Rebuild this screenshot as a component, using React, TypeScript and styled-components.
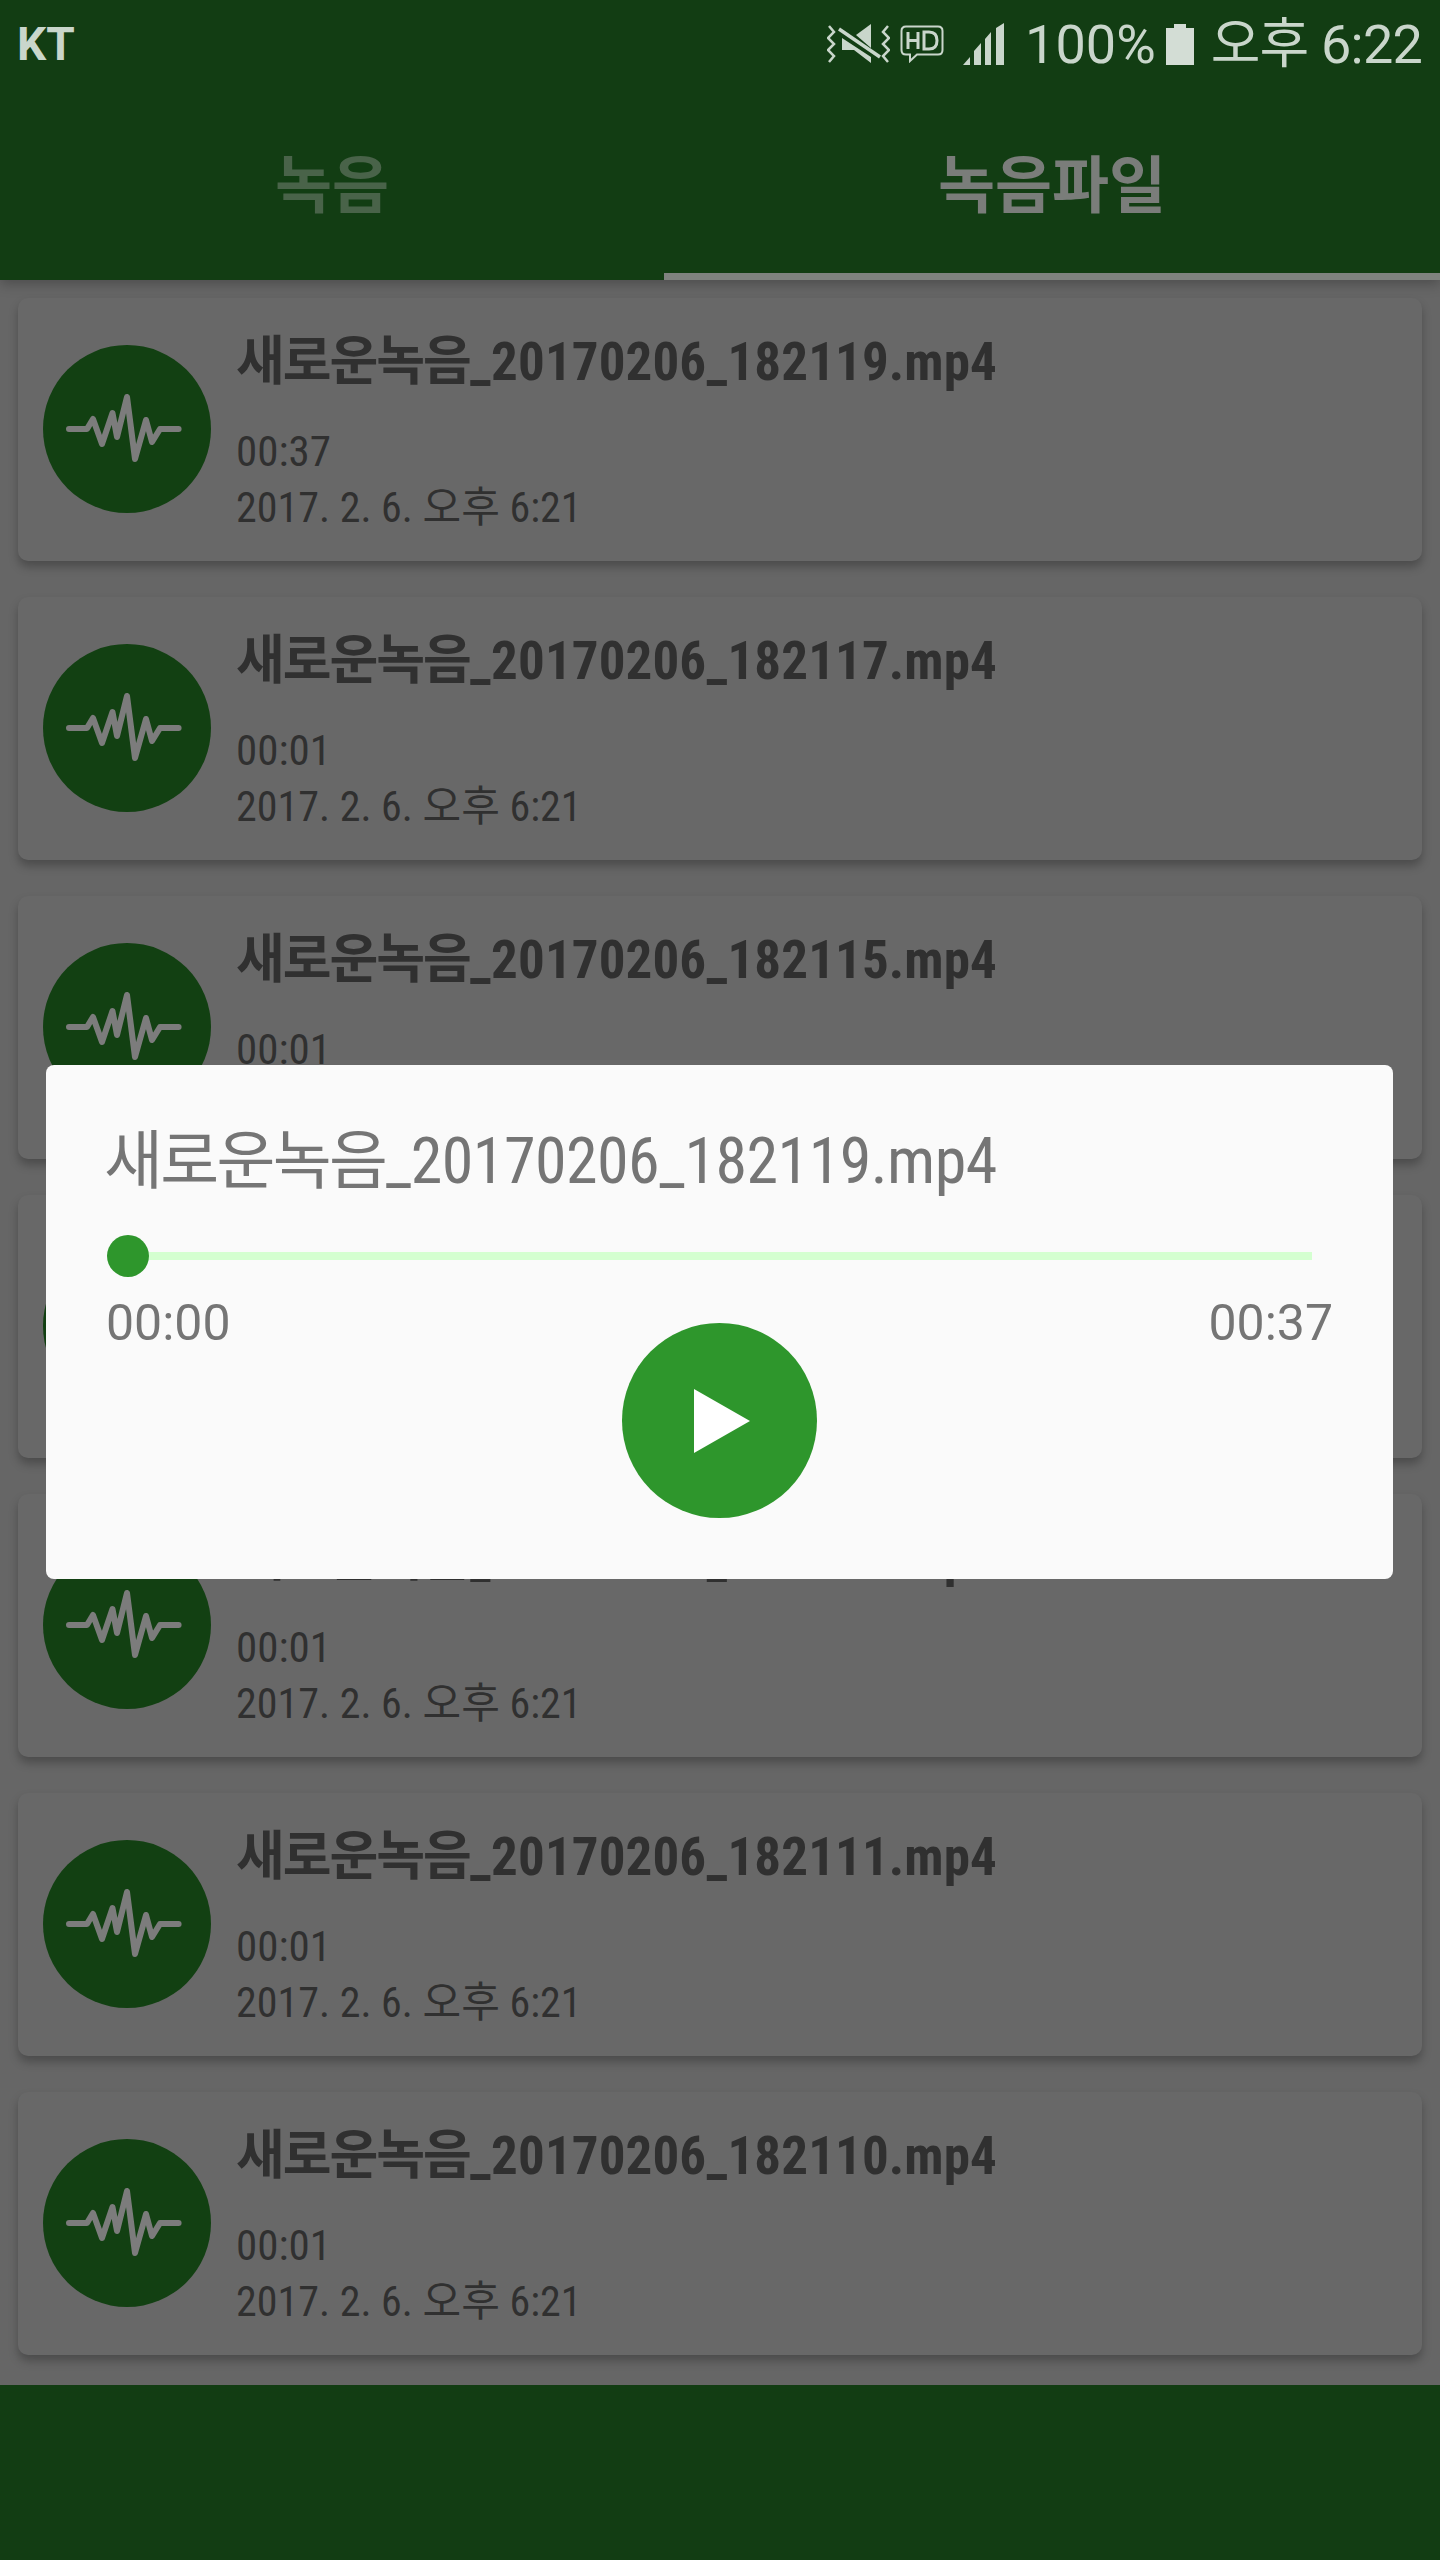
import styled, { createGlobalStyle } from "styled-components";

const GlobalStyle = createGlobalStyle`
  html, body {
    margin: 0;
    padding: 0;
    background: #666666;
  }
  * {
    box-sizing: border-box;
  }
`;

const FONT = `Roboto, "Noto Sans CJK KR", sans-serif`;

const Screen = styled.div`
  position: relative;
  width: 1440px;
  height: 2560px;
  display: flex;
  flex-direction: column;
  overflow: hidden;
  font-family: ${FONT};
  background: #666666;
`;

const Header = styled.header`
  height: 280px;
  flex: none;
  background: #123d13;
  box-shadow: 0 4px 12px rgba(0, 0, 0, 0.25);
  z-index: 1;
`;

const StatusBar = styled.div`
  height: 88px;
  display: flex;
  align-items: center;
  padding: 0 18px 0 17px;
  color: #c9d6cb;
`;

const Carrier = styled.span`
  font-size: 46px;
  font-weight: 700;
  margin-right: auto;
`;

const StatusIcon = styled.svg<{ $gap: number }>`
  display: block;
  flex: none;
  margin-right: ${(props) => props.$gap}px;
`;

const StatusText = styled.span<{ $gap: number; $tight?: number }>`
  font-size: 54px;
  line-height: 88px;
  font-weight: 400;
  margin-top: 2px;
  margin-right: ${(props) => props.$gap}px;
  letter-spacing: ${(props) => props.$tight ?? 0}px;
`;

const Tabs = styled.div`
  height: 192px;
  display: grid;
  grid-template-columns: 664px 776px;
`;

const Tab = styled.div<{ $active?: boolean }>`
  display: flex;
  align-items: flex-start;
  justify-content: center;
  padding-top: 48px;
  font-size: 62px;
  font-weight: 700;
  color: ${(props) => (props.$active ? "#7a7d7a" : "#496349")};
  border-bottom: 7px solid ${(props) => (props.$active ? "#7f837f" : "transparent")};
`;

const List = styled.main`
  display: flex;
  flex-direction: column;
  gap: 36px;
  padding: 18px 18px 30px;
`;

const Card = styled.article`
  height: 263px;
  display: flex;
  align-items: flex-start;
  gap: 25px;
  padding: 0 25px;
  background: #686868;
  border-radius: 10px;
  box-shadow: 0 6px 10px rgba(0, 0, 0, 0.26);
`;

const Avatar = styled.div`
  width: 168px;
  height: 168px;
  flex: none;
  margin-top: 47px;
  border-radius: 50%;
  background: #124012;
`;

const Info = styled.div`
  padding-top: 34px;
  color: #303030;
  font-stretch: 75%;
`;

const FileName = styled.div`
  font-size: 53px;
  line-height: 60px;
  font-weight: 700;
  white-space: nowrap;
  letter-spacing: 0.1px;
`;

const Hangul = styled.span<{ $tight: number }>`
  letter-spacing: ${(props) => props.$tight}px;
`;

const Duration = styled.div`
  margin-top: 34px;
  font-size: 43px;
  line-height: 50px;
`;

const DateLine = styled.div`
  margin-top: 7px;
  font-size: 42px;
  line-height: 50px;
  white-space: nowrap;
`;

const Footer = styled.footer`
  flex: 1;
  background: #123d13;
`;

const Dialog = styled.section`
  position: absolute;
  left: 46px;
  top: 1065px;
  width: 1347px;
  height: 514px;
  padding: 57px 62px 0 61px;
  background: #fafafa;
  border-radius: 8px;
  color: #757575;
  z-index: 2;
`;

const DialogTitle = styled.h2`
  margin: 0 0 0 -3px;
  font-size: 64px;
  line-height: 80px;
  font-weight: 400;
  font-stretch: 75%;
  letter-spacing: -0.55px;
  white-space: nowrap;
`;

const Slider = styled.div`
  display: flex;
  align-items: center;
  margin: 33px 19px 0 0;
`;

const Thumb = styled.div`
  width: 42px;
  height: 42px;
  flex: none;
  border-radius: 50%;
  background: #2e962c;
`;

const Track = styled.div`
  flex: 1;
  height: 8px;
  background: #d4ffd0;
`;

const Controls = styled.div`
  display: grid;
  grid-template-columns: 1fr auto 1fr;
  align-items: start;
  margin-top: 17px;
`;

const Time = styled.span<{ $end?: boolean }>`
  font-size: 50px;
  line-height: 58px;
  text-align: ${(props) => (props.$end ? "right" : "left")};
  margin-left: ${(props) => (props.$end ? "0" : "-1px")};
  margin-right: ${(props) => (props.$end ? "-2px" : "0")};
`;

const PlayButton = styled.button`
  width: 195px;
  height: 195px;
  margin-top: 29px;
  padding: 0;
  display: flex;
  align-items: center;
  justify-content: center;
  border: none;
  border-radius: 50%;
  background: #2e962c;
`;

const PlayIcon = styled.svg`
  margin-left: 6px;
`;

const PREFIX = "새로운녹음";

const files = [
  { stamp: "_20170206_182119.mp4", duration: "00:37" },
  { stamp: "_20170206_182117.mp4", duration: "00:01" },
  { stamp: "_20170206_182115.mp4", duration: "00:01" },
  { stamp: "_20170206_182114.mp4", duration: "00:01" },
  { stamp: "_20170206_182112.mp4", duration: "00:01" },
  { stamp: "_20170206_182111.mp4", duration: "00:01" },
  { stamp: "_20170206_182110.mp4", duration: "00:01" },
];

function Wave() {
  return (
    <svg width="168" height="168" viewBox="0 0 168 168" fill="none">
      <path
        d="M26 84H44L50 74L59 99L69.500 68L74 92L84 52L92 114L103 75L109 97L117 84H135.600"
        stroke="#7c7c7c"
        strokeWidth="6"
        strokeLinecap="round"
        strokeLinejoin="round"
      />
    </svg>
  );
}

function App() {
  return (
    <Screen>
      <GlobalStyle />
      <Header>
        <StatusBar>
          <Carrier>KT</Carrier>
          <StatusIcon $gap={10} width="63" height="42" viewBox="0 0 63 42" fill="none">
            <path d="M2 3L7 9L1 15L7 21L1 27L7 33L2 39" stroke="#c9d6cb" strokeWidth="2.500" />
            <path d="M61 3L56 9L62 15L56 21L62 27L56 33L61 39" stroke="#c9d6cb" strokeWidth="2.500" />
            <path d="M44 1V25L29 12Z" fill="#c9d6cb" />
            <path d="M15 15V27H27L44 40V34Z" fill="#c9d6cb" />
            <path d="M12 6L53 34" stroke="#c9d6cb" strokeWidth="3.500" />
          </StatusIcon>
          <StatusIcon $gap={19} width="44" height="38" viewBox="0 0 44 38" fill="none">
            <path
              d="M6 1.500H38C41 1.500 42.500 3 42.500 6V25C42.500 28 41 29.500 38 29.500H17L10 36V29.500H6C3 29.500 1.500 28 1.500 25V6C1.500 3 3 1.500 6 1.500Z"
              stroke="#c9d6cb"
              strokeWidth="2"
            />
            <path d="M8 7V24M8 15.500H18M18 7V24" stroke="#c9d6cb" strokeWidth="3" />
            <path d="M24 7V24H29C35 24 37 21 37 15.500C37 10 35 7 29 7H24Z" stroke="#c9d6cb" strokeWidth="3" />
          </StatusIcon>
          <StatusIcon $gap={20} width="42" height="42" viewBox="0 0 42 42">
            <path
              d="M0 42L7 34V42ZM11 42V28L18 20V42ZM22 42V16L28 9V42ZM33 42V5L41 0V42Z"
              fill="#c9d6cb"
            />
          </StatusIcon>
          <StatusText $gap={10}>100%</StatusText>
          <StatusIcon $gap={17} width="28" height="41" viewBox="0 0 28 41">
            <path d="M8 0H20V4H28V41H0V4H8Z" fill="#d3ddd5" />
          </StatusIcon>
          <StatusText $gap={0} $tight={-0.8}>오후 6:22</StatusText>
        </StatusBar>
        <Tabs>
          <Tab>녹음</Tab>
          <Tab $active>녹음파일</Tab>
        </Tabs>
      </Header>
      <List>
        {files.map((file) => (
          <Card key={file.stamp}>
            <Avatar>
              <Wave />
            </Avatar>
            <Info>
              <FileName>
                <Hangul $tight={-2}>{PREFIX}</Hangul>
                {file.stamp}
              </FileName>
              <Duration>{file.duration}</Duration>
              <DateLine>2017. 2. 6. 오후 6:21</DateLine>
            </Info>
          </Card>
        ))}
      </List>
      <Footer />
      <Dialog>
        <DialogTitle>
          <Hangul $tight={-2.600}>{PREFIX}</Hangul>
          {files[0].stamp}
        </DialogTitle>
        <Slider>
          <Thumb />
          <Track />
        </Slider>
        <Controls>
          <Time>00:00</Time>
          <PlayButton>
            <PlayIcon width="56" height="64" viewBox="0 0 56 64">
              <path d="M0 0L56 32L0 64Z" fill="#ffffff" />
            </PlayIcon>
          </PlayButton>
          <Time $end>00:37</Time>
        </Controls>
      </Dialog>
    </Screen>
  );
}

export default App;
